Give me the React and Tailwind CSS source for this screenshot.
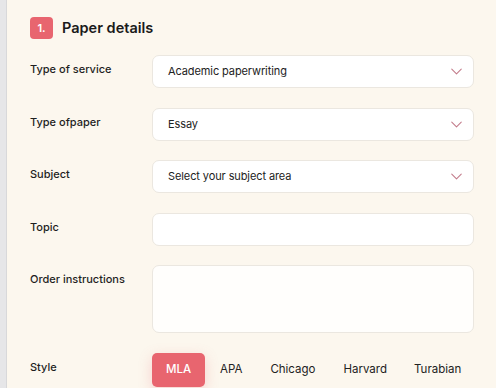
import { ChevronDown } from 'lucide-react'

const FONT = { fontFamily: 'Inter, "Noto Sans", sans-serif' }

function Row({ label, children }) {
  return (
    <div className="flex">
      <div className="w-[122px] shrink-0 pt-[6px] text-[11px] leading-[16px] font-medium text-[#1f1f1f]">{label}</div>
      <div className="w-[322px]">{children}</div>
    </div>
  )
}

function Select({ value }) {
  return (
    <div className="h-[33px] bg-white border border-[#ebe7e0] rounded-[7px] flex items-center justify-between pl-[15px] pr-[7px] text-[11px] text-[#222]">
      <span className="tracking-[-0.1px]">{value}</span>
      <ChevronDown size={19} strokeWidth={1.3} className="text-[#c27a89]" />
    </div>
  )
}

export default function App() {
  return (
    <div className="flex w-[500px] h-[388px] overflow-hidden" style={FONT}>
      <div className="w-[7px] shrink-0 bg-[#e6e6e8] border-r border-[#d8d8da]" />
      <main className="flex-1 bg-[#fcf7ee] pl-[23px]">
        <div className="flex items-center gap-[9px] pt-[17px] h-[39px]">
          <div className="w-[23px] h-[22px] rounded-[4px] bg-[#e8656f] text-white text-[11px] font-semibold flex items-center justify-center">1.</div>
          <h1 className="text-[14.5px] leading-[22px] font-semibold text-[#1a1a1a]">Paper details</h1>
        </div>

        <div className="mt-[16px] flex flex-col gap-[19.5px]">
          <Row label="Type of service"><Select value="Academic paperwriting" /></Row>
          <Row label="Type ofpaper"><Select value="Essay" /></Row>
          <Row label="Subject"><Select value="Select your subject area" /></Row>
          <Row label="Topic">
            <div className="h-[33px] bg-white border border-[#ebe7e0] rounded-[7px]" />
          </Row>
          <Row label="Order instructions">
            <div className="h-[68px] bg-[#fffefc] border border-[#ebe7e0] rounded-[7px]" />
          </Row>
          <Row label="Style">
            <div className="flex items-center text-[11.5px] text-[#222]">
              <button className="w-[53px] h-[34px] rounded-[5px] bg-[#e8656f] text-white font-medium shadow-[0_4px_14px_rgba(232,101,111,0.25)]">MLA</button>
              <span className="ml-[15px]">APA</span>
              <span className="ml-[28px]">Chicago</span>
              <span className="ml-[28px]">Harvard</span>
              <span className="ml-[27px]">Turabian</span>
            </div>
          </Row>
        </div>
      </main>
      <div className="w-[4px] shrink-0 bg-white" />
    </div>
  )
}
